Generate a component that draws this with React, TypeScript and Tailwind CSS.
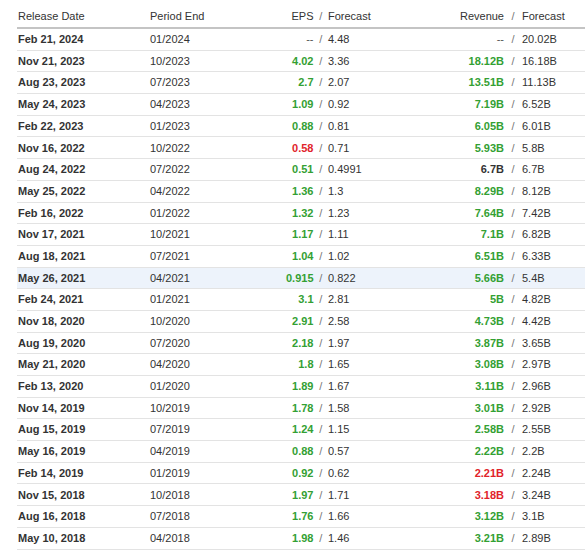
import React from 'react';

type Tone = 'up' | 'down' | 'flat' | 'none';

type Row = {
  date: string;
  period: string;
  eps: string;
  epsTone: Tone;
  epsFc: string;
  rev: string;
  revTone: Tone;
  revFc: string;
  hl?: boolean;
};

const rows: Row[] = [
  { date: 'Feb 21, 2024', period: '01/2024', eps: '--', epsTone: 'none', epsFc: '4.48', rev: '--', revTone: 'none', revFc: '20.02B' },
  { date: 'Nov 21, 2023', period: '10/2023', eps: '4.02', epsTone: 'up', epsFc: '3.36', rev: '18.12B', revTone: 'up', revFc: '16.18B' },
  { date: 'Aug 23, 2023', period: '07/2023', eps: '2.7', epsTone: 'up', epsFc: '2.07', rev: '13.51B', revTone: 'up', revFc: '11.13B' },
  { date: 'May 24, 2023', period: '04/2023', eps: '1.09', epsTone: 'up', epsFc: '0.92', rev: '7.19B', revTone: 'up', revFc: '6.52B' },
  { date: 'Feb 22, 2023', period: '01/2023', eps: '0.88', epsTone: 'up', epsFc: '0.81', rev: '6.05B', revTone: 'up', revFc: '6.01B' },
  { date: 'Nov 16, 2022', period: '10/2022', eps: '0.58', epsTone: 'down', epsFc: '0.71', rev: '5.93B', revTone: 'up', revFc: '5.8B' },
  { date: 'Aug 24, 2022', period: '07/2022', eps: '0.51', epsTone: 'up', epsFc: '0.4991', rev: '6.7B', revTone: 'flat', revFc: '6.7B' },
  { date: 'May 25, 2022', period: '04/2022', eps: '1.36', epsTone: 'up', epsFc: '1.3', rev: '8.29B', revTone: 'up', revFc: '8.12B' },
  { date: 'Feb 16, 2022', period: '01/2022', eps: '1.32', epsTone: 'up', epsFc: '1.23', rev: '7.64B', revTone: 'up', revFc: '7.42B' },
  { date: 'Nov 17, 2021', period: '10/2021', eps: '1.17', epsTone: 'up', epsFc: '1.11', rev: '7.1B', revTone: 'up', revFc: '6.82B' },
  { date: 'Aug 18, 2021', period: '07/2021', eps: '1.04', epsTone: 'up', epsFc: '1.02', rev: '6.51B', revTone: 'up', revFc: '6.33B' },
  { date: 'May 26, 2021', period: '04/2021', eps: '0.915', epsTone: 'up', epsFc: '0.822', rev: '5.66B', revTone: 'up', revFc: '5.4B', hl: true },
  { date: 'Feb 24, 2021', period: '01/2021', eps: '3.1', epsTone: 'up', epsFc: '2.81', rev: '5B', revTone: 'up', revFc: '4.82B' },
  { date: 'Nov 18, 2020', period: '10/2020', eps: '2.91', epsTone: 'up', epsFc: '2.58', rev: '4.73B', revTone: 'up', revFc: '4.42B' },
  { date: 'Aug 19, 2020', period: '07/2020', eps: '2.18', epsTone: 'up', epsFc: '1.97', rev: '3.87B', revTone: 'up', revFc: '3.65B' },
  { date: 'May 21, 2020', period: '04/2020', eps: '1.8', epsTone: 'up', epsFc: '1.65', rev: '3.08B', revTone: 'up', revFc: '2.97B' },
  { date: 'Feb 13, 2020', period: '01/2020', eps: '1.89', epsTone: 'up', epsFc: '1.67', rev: '3.11B', revTone: 'up', revFc: '2.96B' },
  { date: 'Nov 14, 2019', period: '10/2019', eps: '1.78', epsTone: 'up', epsFc: '1.58', rev: '3.01B', revTone: 'up', revFc: '2.92B' },
  { date: 'Aug 15, 2019', period: '07/2019', eps: '1.24', epsTone: 'up', epsFc: '1.15', rev: '2.58B', revTone: 'up', revFc: '2.55B' },
  { date: 'May 16, 2019', period: '04/2019', eps: '0.88', epsTone: 'up', epsFc: '0.57', rev: '2.22B', revTone: 'up', revFc: '2.2B' },
  { date: 'Feb 14, 2019', period: '01/2019', eps: '0.92', epsTone: 'up', epsFc: '0.62', rev: '2.21B', revTone: 'down', revFc: '2.24B' },
  { date: 'Nov 15, 2018', period: '10/2018', eps: '1.97', epsTone: 'up', epsFc: '1.71', rev: '3.18B', revTone: 'down', revFc: '3.24B' },
  { date: 'Aug 16, 2018', period: '07/2018', eps: '1.76', epsTone: 'up', epsFc: '1.66', rev: '3.12B', revTone: 'up', revFc: '3.1B' },
  { date: 'May 10, 2018', period: '04/2018', eps: '1.98', epsTone: 'up', epsFc: '1.46', rev: '3.21B', revTone: 'up', revFc: '2.89B' },
];

const toneClass: Record<Tone, string> = {
  up: 'font-bold text-[#33a033]',
  down: 'font-bold text-[#e1232a]',
  flat: 'font-bold text-[#333]',
  none: 'text-[#555]',
};

export default function App() {
  return (
    <div className="w-[585px] h-[550px] overflow-hidden bg-white pt-[6px] text-[11px] text-[#333]" style={{ fontFamily: '"Liberation Sans", Arial, sans-serif' }}>
      {/* Header */}
      <div className="ml-[17px] flex h-[23px] items-center border-b-2 border-[#c4c4c4] pb-[1px]">
        <div className="w-[133px] pl-[1px]">Release Date</div>
        <div className="w-[100px]">Period End</div>
        <div className="w-[63.5px] text-right">EPS</div>
        <div className="w-[14.5px] text-center text-[#777]">/</div>
        <div className="w-[94px]">Forecast</div>
        <div className="w-[82px] text-right">Revenue</div>
        <div className="w-[18px] text-center text-[#777]">/</div>
        <div>Forecast</div>
      </div>

      {/* Rows */}
      {rows.map(r => (
        <div
          key={r.date}
          className={`ml-[17px] flex h-[21.7px] items-center border-b border-[#e3e3e3] ${r.hl ? 'bg-[#edf3fb]' : ''}`}
        >
          <div className="w-[133px] pl-[1px] font-bold">{r.date}</div>
          <div className="w-[100px]">{r.period}</div>
          <div className={`w-[63.5px] text-right ${toneClass[r.epsTone]}`}>{r.eps}</div>
          <div className="w-[14.5px] text-center text-[#777]">/</div>
          <div className="w-[94px]">{r.epsFc}</div>
          <div className={`w-[82px] text-right ${toneClass[r.revTone]}`}>{r.rev}</div>
          <div className="w-[18px] text-center text-[#777]">/</div>
          <div>{r.revFc}</div>
        </div>
      ))}
    </div>
  );
}
